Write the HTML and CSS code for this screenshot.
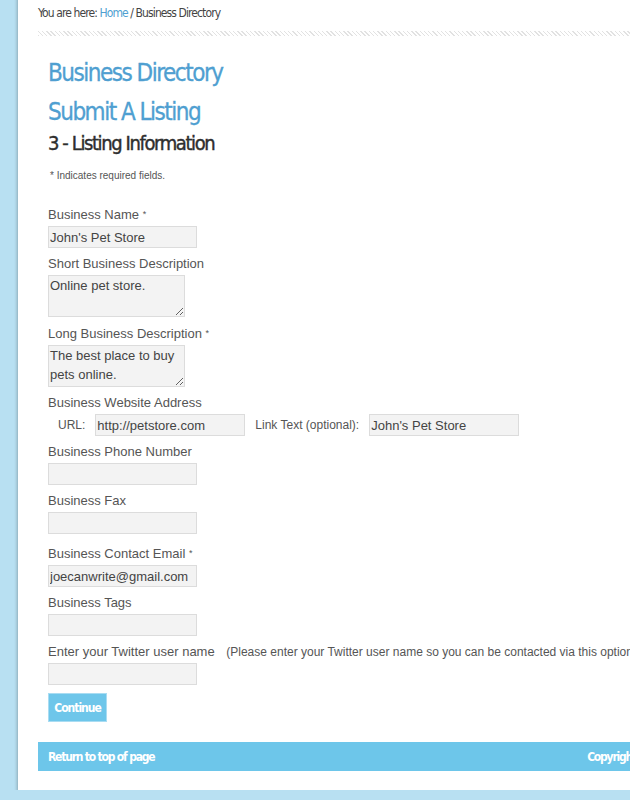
FILE: index.html
```html
<!DOCTYPE html>
<html>
<head>
    <title>Business Directory - Submit A Listing</title>
    <link rel="stylesheet" href="styles.css">
</head>
<body>
    <div class="page">
        <div class="breadcrumb">You are here: <a href="#">Home</a> / Business Directory</div>
        <div class="hatch"></div>

        <h1 class="title">Business Directory</h1>
        <h2 class="title">Submit A Listing</h2>
        <h3 class="step">3 - Listing Information</h3>
        <p class="note">* Indicates required fields.</p>

        <form id="listingForm" autocomplete="off">
            <div class="field">
                <label for="name">Business Name <span class="req">*</span></label>
                <input type="text" id="name" value="John's Pet Store">
            </div>
            <div class="field">
                <label for="shortDesc">Short Business Description</label>
                <textarea id="shortDesc">Online pet store.</textarea>
            </div>
            <div class="field">
                <label for="longDesc">Long Business Description <span class="req">*</span></label>
                <textarea id="longDesc">The best place to buy pets online.</textarea>
            </div>
            <div class="field">
                <label>Business Website Address</label>
                <div class="url-row">
                    <span class="sub">URL:</span>
                    <input type="text" class="wide" value="http://petstore.com">
                    <span class="sub link-label">Link Text (optional):</span>
                    <input type="text" class="wide" value="John's Pet Store">
                </div>
            </div>
            <div class="field">
                <label for="phone">Business Phone Number</label>
                <input type="text" id="phone">
            </div>
            <div class="field">
                <label for="fax">Business Fax</label>
                <input type="text" id="fax">
            </div>
            <div class="field spaced">
                <label for="email">Business Contact Email <span class="req">*</span></label>
                <input type="text" id="email" value="joecanwrite@gmail.com">
            </div>
            <div class="field">
                <label for="tags">Business Tags</label>
                <input type="text" id="tags">
            </div>
            <div class="field">
                <label for="twitter">Enter your Twitter user name <span class="help">(Please enter your Twitter user name so you can be contacted via this option)</span></label>
                <input type="text" id="twitter">
            </div>
            <input type="submit" class="button" value="Continue">
        </form>

        <div class="footer">
            <a href="#">Return to top of page</a>
            <span class="copy">Copyright &copy; 2013</span>
        </div>
    </div>
</body>
</html>
```

FILE: styles.css
```css
body {
    margin: 0;
    background: #b8e0f2;
    overflow: hidden;
    font-family: "Liberation Sans", Arial, sans-serif;
}

.page {
    width: 940px;
    margin-left: 18px;
    margin-top: -10px;
    padding: 15px 20px 19px 20px;
    background: #fff;
    box-shadow: -1px 2px 3px rgba(0, 0, 0, 0.25);
}

/* condensed headline face */
.breadcrumb,
.title,
.step,
.button,
.footer {
    font-family: "DejaVu Sans Condensed", "DejaVu Sans", sans-serif;
    font-stretch: condensed;
}

.breadcrumb {
    font-size: 12px;
    line-height: 16px;
    color: #444;
    letter-spacing: -0.9px;
}

.breadcrumb a {
    color: #4f9fd1;
    text-decoration: none;
}

.hatch {
    height: 5px;
    margin-top: 10px;
    background: repeating-linear-gradient(45deg, #e2e2e2 0, #e2e2e2 1px, #fff 1px, #fff 3px);
}

.title {
    font-weight: normal;
    font-size: 24px;
    line-height: 30px;
    color: #4f9fd1;
    margin: 0 0 9px 10px;
    letter-spacing: -1.5px;
    -webkit-text-stroke: 0.3px #4f9fd1;
}

h1.title {
    margin-top: 22px;
}

.step {
    font-weight: normal;
    font-size: 20px;
    line-height: 26px;
    color: #2e2e2e;
    margin: -6px 0 0 10px;
    letter-spacing: -1.4px;
    -webkit-text-stroke: 0.4px #2e2e2e;
}

.note {
    font-size: 10px;
    color: #555;
    margin: 14px 0 0 12px;
}

#listingForm {
    margin: 25px 0 0 10px;
}

.field {
    margin-bottom: 8px;
}

.field.spaced {
    margin-top: 11px;
}

.field label {
    display: block;
    font-size: 13px;
    line-height: 16px;
    color: #555;
    margin-bottom: 3px;
}

.req {
    font-size: 9px;
    vertical-align: 2px;
}

.help {
    font-size: 12px;
    margin-left: 8px;
}

input[type="text"],
textarea {
    box-sizing: border-box;
    width: 149px;
    height: 22px;
    margin: 0;
    padding: 2px 1px;
    border: 1px solid #dcdcdc;
    background: #f3f3f3;
    font-family: "Liberation Sans", Arial, sans-serif;
    font-size: 13px;
    color: #444;
}

textarea {
    display: block;
    width: 137px;
    height: 42px;
    line-height: 19px;
    padding: 0 1px;
    resize: vertical;
    overflow: hidden;
}

.url-row {
    display: flex;
    align-items: center;
    padding-left: 10px;
}

.url-row .wide {
    width: 150px;
}

.sub {
    font-size: 12px;
    color: #555;
    margin-right: 10px;
}

.link-label {
    margin-left: 10px;
}

.button {
    display: block;
    width: 59px;
    height: 29px;
    margin-top: 2px;
    padding: 0;
    border: 1px solid #a9dcf2;
    background: #6ec6ea;
    color: #fff;
    font-weight: bold;
    font-size: 12px;
    letter-spacing: -1px;
    cursor: pointer;
}

.footer {
    display: flex;
    justify-content: space-between;
    align-items: center;
    height: 29px;
    margin-top: 20px;
    padding: 0 10px;
    background: #6dc6ea;
    font-weight: bold;
    font-size: 12px;
    letter-spacing: -1.2px;
}

.footer a,
.footer .copy {
    color: #fff;
    text-decoration: none;
}

.copy {
    margin-right: 292px;
}
```
